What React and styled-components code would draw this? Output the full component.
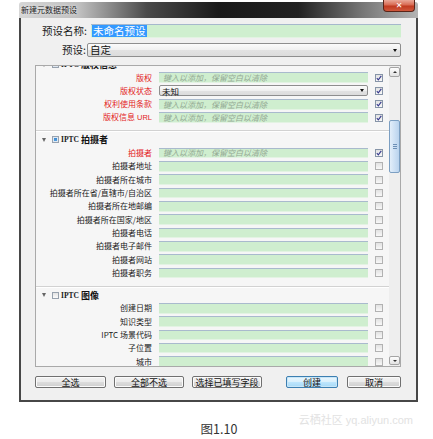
import styled, { createGlobalStyle } from 'styled-components';

const GlobalStyle = createGlobalStyle`
  html, body {
    margin: 0;
    padding: 0;
    background: #fff;
  }
  body {
    font-family: "Noto Sans CJK SC", "Liberation Sans", sans-serif;
  }
  * {
    box-sizing: border-box;
  }
`;

const Page = styled.div`
  width: 433px;
  height: 439px;
  overflow: hidden;
  padding-top: 2px;
`;

const Window = styled.div`
  margin-left: 19px;
  width: 399px;
`;

const TitleBar = styled.div`
  height: 16px;
  display: flex;
  align-items: flex-start;
  justify-content: space-between;
  padding: 0 3px 0 2px;
  border-radius: 3px 3px 0 0;
  background: linear-gradient(
    to right,
    #d6d6d6 0%,
    #c0c0c0 15%,
    #4a4a4a 32%,
    #1a1a1a 50%,
    #222 70%,
    #767676 86%,
    #b4b4b4 100%
  );
`;

const Title = styled.span`
  font-size: 8px;
  line-height: 15px;
  color: #1c1c1c;
  text-shadow: 0 0 3px #fff;
`;

const CloseButton = styled.div`
  width: 32px;
  height: 12px;
  margin-top: -2px;
  display: flex;
  align-items: center;
  justify-content: center;
  color: #fff;
  font-family: "DejaVu Sans", sans-serif;
  font-weight: bold;
  font-size: 8px;
  border: 1px solid #5a2418;
  border-top: none;
  border-radius: 0 0 4px 4px;
  background: linear-gradient(#e9a898 0%, #d86a52 45%, #c03a20 55%, #d0583c 100%);
`;

const Body = styled.div`
  background: #f0f0f0;
  border: 2px solid #474747;
  border-top: none;
  padding: 6px 15px 12px 14px;
`;

const FieldRow = styled.div`
  display: grid;
  grid-template-columns: ${p => p.$labelWidth}px 1fr;
  column-gap: ${p => p.$gap}px;
  align-items: center;
  height: 14px;
  margin-top: ${p => p.$top || 0}px;
`;

const FieldLabel = styled.span`
  text-align: right;
  font-size: 10.5px;
  line-height: 1;
  color: #1a1a1a;
  white-space: nowrap;
`;

const NameField = styled.div`
  height: 14px;
  background: #cfefcf;
  border-top: 1px solid #a6b8cc;
  border-bottom: 1px solid #e2f3e2;
  padding-left: 1px;
  display: flex;
  align-items: center;
`;

const Selection = styled.span`
  background: #3399ff;
  color: #fff;
  font-size: 10.5px;
  line-height: 12px;
  padding: 0 1px;
`;

const Select = styled.div`
  height: ${p => p.$height}px;
  display: flex;
  align-items: center;
  justify-content: space-between;
  padding: 0 3px 0 2px;
  font-size: ${p => p.$size}px;
  line-height: 1;
  color: #111;
  border: 1px solid #8e8e8e;
  border-radius: 2px;
  background: linear-gradient(#fbfbfb 0%, #f0f0f0 50%, #e2e2e2 51%, #dcdcdc 100%);
`;

const Arrow = styled.span`
  width: 0;
  height: 0;
  border-left: 2.5px solid transparent;
  border-right: 2.5px solid transparent;
  border-top: 3px solid #111;
`;

const Panel = styled.div`
  margin-top: 8px;
  height: 302px;
  display: flex;
  border: 1px solid #a9a9a9;
  background: #f6f6f6;
`;

const List = styled.div`
  flex: 1;
  overflow: hidden;
`;

const ListInner = styled.div`
  margin-top: -10px;
`;

const Section = styled.div`
  padding: 2px 0 6px;
  border-top: 1px solid #d2d2d2;
  box-shadow: inset 0 1px 0 #fff;

  &:first-child {
    border-top: none;
    box-shadow: none;
  }
`;

const SectionHeader = styled.div`
  height: 13px;
  display: flex;
  align-items: center;
  padding-left: 6px;
`;

const Disclosure = styled.span`
  width: 0;
  height: 0;
  margin-right: 6px;
  border-left: 2.5px solid transparent;
  border-right: 2.5px solid transparent;
  border-top: 4px solid #666;
`;

const HeaderBox = styled.span`
  width: 7px;
  height: 7px;
  border: 1px solid #98a2ae;
  background: ${p => (p.$mixed ? 'linear-gradient(#2f7fca, #5fa9e6)' : 'linear-gradient(#e4e4e4, #fbfbfb)')};
  box-shadow: ${p => (p.$mixed ? 'inset 0 0 0 1px #dfe8f2' : 'none')};
  margin-right: 2px;
`;

const Iptc = styled.span`
  font-family: "Liberation Serif", serif;
  font-weight: bold;
  font-size: 7.5px;
  color: #1a1a1a;
  margin-right: 2px;
`;

const HeaderTitle = styled.span`
  font-weight: bold;
  font-size: 9px;
  line-height: 1;
  color: #111;
`;

const Row = styled.div`
  height: 13.34px;
  display: grid;
  grid-template-columns: 116px 209px 8px;
  column-gap: 7px;
  align-items: center;
`;

const RowLabel = styled.span`
  text-align: right;
  font-size: 8px;
  line-height: 1;
  white-space: nowrap;
  color: ${p => (p.$red ? '#e3231c' : '#1a1a1a')};
`;

const Latin = styled.span`
  font-family: "Liberation Sans", sans-serif;
  font-size: 7.5px;
`;

const TextInput = styled.input`
  height: 10.5px;
  width: 100%;
  margin: 0;
  padding: 0 0 0 4px;
  border: none;
  border-top: 1px solid #a9bacd;
  border-bottom: 1px solid #e3f3e3;
  background: #cfeecf;
  font-family: "Noto Sans CJK SC", sans-serif;
  font-size: 8px;
  outline: none;

  &::placeholder {
    color: #93a893;
    font-style: italic;
  }
`;

const Box = styled.span`
  width: 8px;
  height: 8px;
  display: flex;
  align-items: center;
  justify-content: center;
  border: 1px solid ${p => (p.$checked ? '#8795a8' : '#b2b2b2')};
  background: linear-gradient(#e2e2e2, #f8f8f8);
`;

const ScrollBar = styled.div`
  width: 11px;
  display: flex;
  flex-direction: column;
  background: #eeeeee;
  padding: 1px 0;
`;

const ScrollButton = styled.div`
  height: ${p => p.$height}px;
  display: flex;
  align-items: center;
  justify-content: center;
  border: 1px solid #a4a4a4;
  border-radius: 2px;
  background: linear-gradient(#fdfdfd, #e2e2e2);
`;

const ScrollArrow = styled.span`
  width: 0;
  height: 0;
  border-left: 2px solid transparent;
  border-right: 2px solid transparent;
  ${p => (p.$up ? 'border-bottom: 2px solid #333;' : 'border-top: 2px solid #333;')}
`;

const Thumb = styled.div`
  margin-top: 43px;
  height: 53px;
  display: flex;
  flex-direction: column;
  align-items: center;
  justify-content: center;
  gap: 1px;
  border: 1px solid #7c9fc2;
  border-radius: 2px;
  background: linear-gradient(to right, #e2eefa, #b9d3ee);
`;

const Grip = styled.span`
  width: 4px;
  height: 1px;
  background: #6c8fb6;
`;

const Track = styled.div`
  flex: 1;
`;

const ButtonBar = styled.div`
  margin-top: 9px;
  height: 12px;
  display: flex;
  justify-content: space-between;
`;

const ButtonGroup = styled.div`
  display: flex;
  gap: ${p => p.$gap}px;
`;

const Button = styled.button`
  width: ${p => p.$width}px;
  height: 12px;
  margin: 0;
  padding: 0;
  font-family: "Noto Sans CJK SC", sans-serif;
  font-size: 9px;
  line-height: 1;
  color: #111;
  border: 1px solid ${p => (p.$primary ? '#3c7fb1' : '#707070')};
  border-radius: 2px;
  background: ${p =>
    p.$primary
      ? 'linear-gradient(#eaf6fd 0%, #d9f0fc 50%, #bee6fd 51%, #a7d9f5 100%)'
      : 'linear-gradient(#f2f2f2 0%, #ebebeb 50%, #dddddd 51%, #cfcfcf 100%)'};
  box-shadow: ${p => (p.$primary ? 'inset 0 0 0 1px #c8e6f8' : 'inset 0 0 0 1px #fbfbfb')};
`;

const Footer = styled.div`
  position: relative;
  padding: 19px 0 0 5px;
  text-align: center;
  font-size: 12.5px;
  line-height: 15px;
`;

const Caption = styled.span`
  color: #333;
`;

const Watermark = styled.span`
  position: absolute;
  top: 12px;
  right: 20px;
  font-family: "Liberation Sans", "Noto Sans CJK SC", sans-serif;
  font-size: 11px;
  line-height: 13px;
  color: #e2e2e2;
  white-space: nowrap;
`;

const PLACEHOLDER = '键入以添加，保留空白以清除';

function Check({ checked }) {
  return (
    <Box $checked={checked}>
      {checked && (
        <svg width="6" height="6" viewBox="0 0 6 6">
          <path d="M0.8 3.2 L2.3 4.8 L5.3 0.9" fill="none" stroke="#35388c" strokeWidth="1.1" />
        </svg>
      )}
    </Box>
  );
}

function Field({ label, red, checked, placeholder, select, latin }) {
  return (
    <Row>
      <RowLabel $red={red}>
        {label}
        {latin && <Latin> {latin}</Latin>}
      </RowLabel>
      {select ? (
        <Select $height={11} $size={8.5}>
          {select}
          <Arrow />
        </Select>
      ) : (
        <TextInput readOnly placeholder={placeholder ? PLACEHOLDER : ''} />
      )}
      <Check checked={checked} />
    </Row>
  );
}

function Header({ title, mixed }) {
  return (
    <SectionHeader>
      <Disclosure />
      <HeaderBox $mixed={mixed} />
      <Iptc>IPTC</Iptc>
      <HeaderTitle>{title}</HeaderTitle>
    </SectionHeader>
  );
}

const creatorFields = [
  '拍摄者地址',
  '拍摄者所在城市',
  '拍摄者所在省/直辖市/自治区',
  '拍摄者所在地邮编',
  '拍摄者所在国家/地区',
  '拍摄者电话',
  '拍摄者电子邮件',
  '拍摄者网站',
  '拍摄者职务',
];

const imageFields = ['创建日期', '知识类型', 'IPTC 场景代码', '子位置', '城市'];

export default function App() {
  return (
    <Page>
      <GlobalStyle />
      <Window>
        <TitleBar>
          <Title>新建元数据预设</Title>
          <CloseButton>✕</CloseButton>
        </TitleBar>
        <Body>
          <FieldRow $labelWidth={52} $gap={4}>
            <FieldLabel>预设名称:</FieldLabel>
            <NameField>
              <Selection>未命名预设</Selection>
            </NameField>
          </FieldRow>
          <FieldRow $labelWidth={51} $gap={1} $top={5}>
            <FieldLabel>预设:</FieldLabel>
            <Select $height={14} $size={10.5}>
              自定
              <Arrow />
            </Select>
          </FieldRow>

          <Panel>
            <List>
              <ListInner>
                <Section>
                  <Header title="版权信息" mixed />
                  <Field label="版权" red checked placeholder />
                  <Field label="版权状态" red checked select="未知" />
                  <Field label="权利使用条款" red checked placeholder />
                  <Field label="版权信息" latin="URL" red checked placeholder />
                </Section>
                <Section>
                  <Header title="拍摄者" mixed />
                  <Field label="拍摄者" red checked placeholder />
                  {creatorFields.map(f => (
                    <Field key={f} label={f} />
                  ))}
                </Section>
                <Section>
                  <Header title="图像" />
                  {imageFields.map(f => (
                    <Field key={f} label={f} />
                  ))}
                </Section>
              </ListInner>
            </List>
            <ScrollBar>
              <ScrollButton $height={10}>
                <ScrollArrow $up />
              </ScrollButton>
              <Thumb>
                <Grip />
                <Grip />
                <Grip />
              </Thumb>
              <Track />
              <ScrollButton $height={9}>
                <ScrollArrow />
              </ScrollButton>
            </ScrollBar>
          </Panel>

          <ButtonBar>
            <ButtonGroup $gap={8}>
              <Button $width={71}>全选</Button>
              <Button $width={70}>全部不选</Button>
              <Button $width={70}>选择已填写字段</Button>
            </ButtonGroup>
            <ButtonGroup $gap={9}>
              <Button $width={52} $primary>创建</Button>
              <Button $width={54}>取消</Button>
            </ButtonGroup>
          </ButtonBar>
        </Body>
      </Window>
      <Footer>
        <Watermark>云栖社区 yq.aliyun.com</Watermark>
        <Caption>图1.10</Caption>
      </Footer>
    </Page>
  );
}
